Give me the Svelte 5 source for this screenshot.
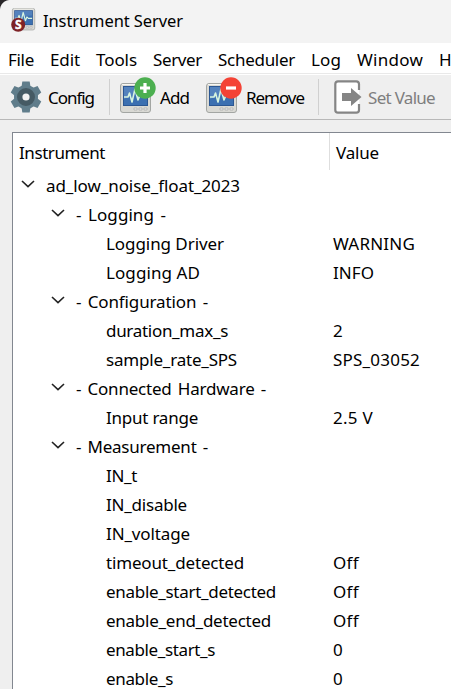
<script>
  const menus = [
    ['File', 8, 26], ['Edit', 50, 30], ['Tools', 96, 41], ['Server', 153, 49],
    ['Scheduler', 218, 77], ['Log', 311, 30], ['Window', 357, 66], ['Help', 439, 36]
  ];
  const rows = [
    [0, 'ad_low_noise_float_2023', 194, ''],
    [1, '- Logging -', 90, ''],
    [2, 'Logging Driver', 118, 'WARNING', 82],
    [2, 'Logging AD', 94, 'INFO', 41],
    [1, '- Configuration -', 132, ''],
    [2, 'duration_max_s', 122, '2', 10],
    [2, 'sample_rate_SPS', 131, 'SPS_03052', 87],
    [1, '- Connected Hardware -', 190, ''],
    [2, 'Input range', 92, '2.5 V', 40],
    [1, '- Measurement -', 132, ''],
    [2, 'IN_t', 31, ''],
    [2, 'IN_disable', 81, ''],
    [2, 'IN_voltage', 84, ''],
    [2, 'timeout_detected', 138, 'Off', 26],
    [2, 'enable_start_detected', 170, 'Off', 26],
    [2, 'enable_end_detected', 165, 'Off', 26],
    [2, 'enable_start_s', 109, '0', 10],
    [2, 'enable_s', 67, '0', 10]
  ];

  function fit(node, width) {
    const natural = node.getBoundingClientRect().width;
    const n = node.textContent.length;
    if (n > 1) node.style.letterSpacing = `${(width - natural) / n}px`;
  }
</script>

{#snippet monitor()}
  <rect x="0.5" y="0.5" width="30" height="29" rx="2.5" fill="#d9d9d4" stroke="#a3a6a3" />
  <path d="M2 1.5H29" stroke="#f7f7f3" />
  <rect x="3" y="3" width="25" height="20" fill="#2b5793" />
  <rect x="4" y="4" width="23" height="18" fill="#3c70b1" />
  <path d="M4 4H27V10Q14 10 4 16Z" fill="#6e99cb" opacity=".45" />
  <path d="M4 14H8L9.5 10L12 19L15 6L18 17L20 12L22 14H27" fill="none" stroke="#d8f5df" stroke-width="1.6" stroke-linejoin="round" />
  <path d="M14 25h3v2h-3zM19 25h3v2h-3zM24 25h3v2h-3z" fill="#eee" stroke="#aaa" stroke-width=".7" />
{/snippet}

<div class="window">
  <header>
    <svg class="app-icon" width="25" height="25" viewBox="0 0 25 25">
      <g transform="translate(1 0) scale(.745)">{@render monitor()}</g>
      <circle cx="7.2" cy="16.7" r="7" fill="#7e2226" />
      <text x="7.2" y="21" text-anchor="middle" fill="#fff" stroke="#fff" stroke-width=".4" font-size="12" font-weight="700">S</text>
    </svg>
    <span class="title" use:fit={140}>Instrument Server</span>
  </header>

  <nav>
    {#each menus as [label, x, width], i}
      <span class="menu" style:width="{(menus[i + 1]?.[1] ?? 480) - x}px"><span use:fit={width}>{label}</span></span>
    {/each}
  </nav>

  <div class="toolbar">
    <button class="config">
      <svg width="32" height="32" viewBox="0 0 32 32">
        <g fill="#607d8b">
          <circle cx="16" cy="16" r="12" />
          {#each [0, 60, 120, 180, 240, 300] as a}
            <path d="M11.5 6L12.3 .5H19.7L20.5 6Z" transform="rotate({a} 16 16)" />
          {/each}
        </g>
        <circle cx="16" cy="16" r="6.3" fill="#f2f2f2" stroke="#455a64" stroke-width="5.4" />
      </svg>
      <span use:fit={46}>Config</span>
    </button>
    <i></i>
    <button class="add">
      <svg width="37" height="37" viewBox="0 0 37 37">
        <g transform="translate(0 6)">{@render monitor()}</g>
        <circle cx="25" cy="11" r="10.7" fill="#4caf50" />
        <path d="M25 6V16M20 11H30" stroke="#fff" stroke-width="3.2" />
      </svg>
      <span use:fit={29}>Add</span>
    </button>
    <button class="remove">
      <svg width="37" height="37" viewBox="0 0 37 37">
        <g transform="translate(0 6)">{@render monitor()}</g>
        <circle cx="25" cy="11" r="10.7" fill="#f44336" />
        <path d="M20 11H30" stroke="#fff" stroke-width="3.2" />
      </svg>
      <span use:fit={58}>Remove</span>
    </button>
    <i></i>
    <button class="set" disabled>
      <svg width="28" height="34" viewBox="0 0 28 34">
        <path d="M25 10V4Q25 1.3 22.3 1.3H4Q1.3 1.3 1.3 4V30Q1.3 32.7 4 32.7H22.3Q25 32.7 25 30V24" fill="#fff" />
        <path d="M25 10V4Q25 1.3 22.3 1.3H4Q1.3 1.3 1.3 4V30Q1.3 32.7 4 32.7H22.3Q25 32.7 25 30V24" fill="none" stroke="#858585" stroke-width="2.2" />
        <path d="M8 13H17V8L27.5 17L17 26V21H8Z" fill="#858585" />
      </svg>
      <span use:fit={67}>Set Value</span>
    </button>
  </div>

  <main>
    <section>
      <div class="columns">
        <div><span use:fit={86}>Instrument</span></div>
        <div><span use:fit={43}>Value</span></div>
      </div>
      {#each rows as [level, name, width, value, valueWidth]}
        <div class="row">
          <div class="name level{level}">
            {#if level < 2}
              <svg width="14" height="8" viewBox="0 0 14 8"><path d="M1 1L7 6.7L13 1" fill="none" stroke="#222" stroke-width="1.6" /></svg>
            {/if}
            <span use:fit={width}>{name}</span>
          </div>
          {#if value}<span class="value" use:fit={valueWidth}>{value}</span>{/if}
        </div>
      {/each}
    </section>
  </main>
</div>

<style>
  :global(body) { background: #fff; }
  .window { width: 451px; height: 693px; overflow: hidden; font: 17px/29px "Noto Sans", sans-serif; color: #000; white-space: nowrap; background: #fff; }
  header { height: 43px; box-sizing: border-box; display: flex; align-items: flex-start; padding: 8px 0 0 11px; background: radial-gradient(circle at 10px 10px, #f3f3f3 9.5px, #292629 10.5px) 0 0 / 10px 10px no-repeat, #f3f3f3; }
  .app-icon { flex: none; }
  .title { margin: -2px 0 0 7px; font-size: 16.5px; }
  nav { display: flex; height: 30px; padding-left: 8px; border-bottom: 1px solid #e9e9e9; line-height: 34px; }
  .menu { flex: none; }
  .toolbar { height: 46px; box-sizing: border-box; border-top: 1px solid #fff; border-bottom: 1px solid #b8b8b8; background: #efefef; display: flex; align-items: center; padding-left: 10px; }
  .toolbar i { width: 1px; height: 36px; background: #d0d0d0; flex: none; }
  button { box-sizing: border-box; padding: 0; border: 0; background: none; color: #000; font: inherit; text-align: left; display: flex; align-items: center; flex: none; }
  button svg { flex: none; }
  .config { width: 99px; gap: 6px; }
  .add { width: 96px; padding-left: 10px; gap: 3px; }
  .remove { width: 112px; gap: 3px; }
  .add svg, .remove svg { margin-top: -3px; }
  .set { padding-left: 15px; gap: 6px; color: #7e7e7e; }
  main { height: 569px; box-sizing: border-box; background: #efefef; padding: 12px 0 0 12px; overflow: hidden; }
  section { height: 557px; overflow: hidden; background: #fff; border-top: 1px solid #828790; border-left: 1px solid #828790; box-sizing: border-box; }
  .columns { height: 38px; display: flex; line-height: 39px; }
  .columns div:first-child { width: 317px; box-sizing: border-box; padding-left: 6px; border-right: 1px solid #dedede; height: 37px; }
  .columns div:last-child { padding-left: 6px; }
  .row { display: flex; height: 29px; }
  .name { width: 320px; box-sizing: border-box; display: flex; flex: none; }
  .name svg { margin: 9px 11px 0 0; flex: none; }
  .level0 { padding-left: 8px; }
  .level1 { padding-left: 38px; word-spacing: 2px; }
  .level2 { padding-left: 93px; }
</style>
